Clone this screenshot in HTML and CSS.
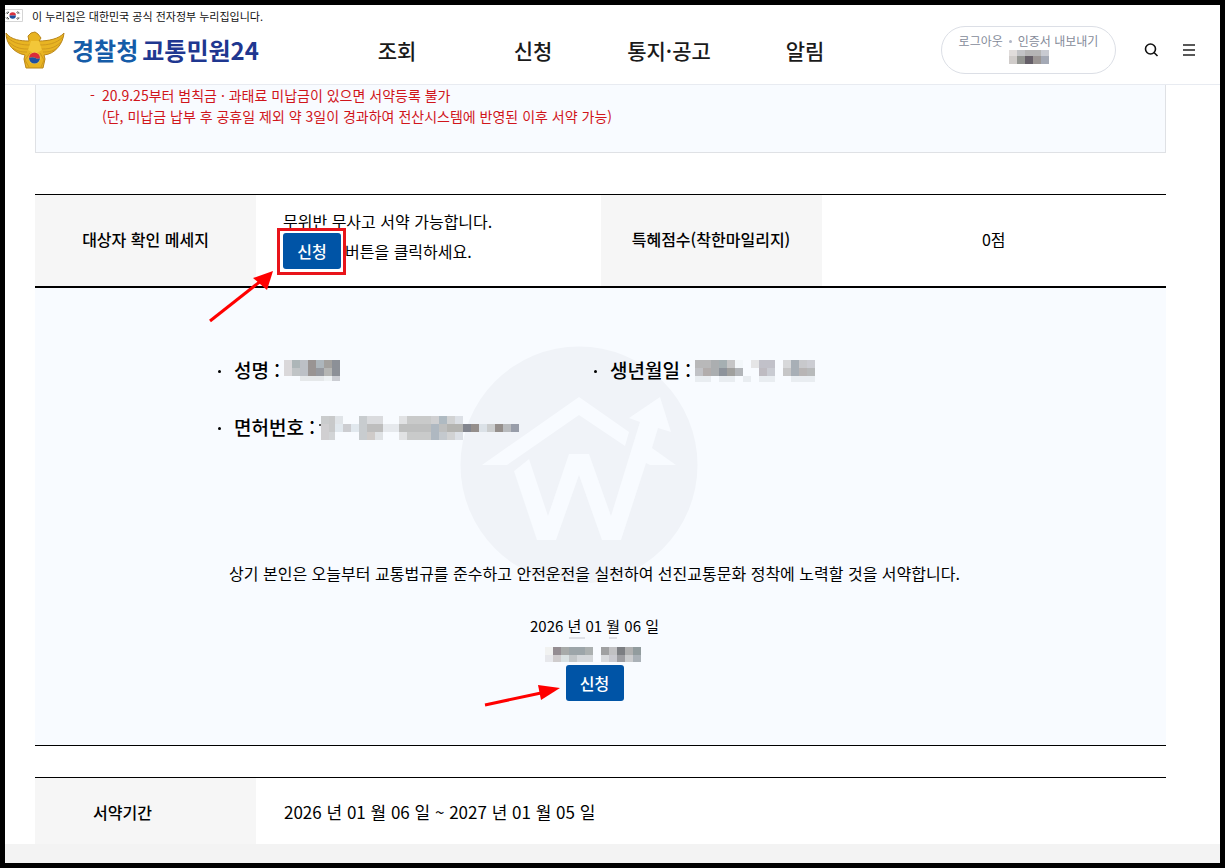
FILE: index.html
```html
<!DOCTYPE html>
<html lang="ko">
	<head>
		<meta charset="utf-8">
		<meta name="viewport" content="width=device-width, initial-scale=1">
		<title>경찰청 교통민원24</title>
		<link rel="stylesheet" href="styles.css">
	</head>

	<body>
		<header class="header">
			<div class="gov">
				<svg class="flag" viewBox="0 0 18 13" aria-hidden="true">
					<path d="M0 .5H17.500V12.500H0" fill="#fff" stroke="#d5d5d5"/>
					<path d="M4.500 6.500a3.200 3.200 0 0 1 6.400 0z" fill="#d8323f"/>
					<path d="M4.500 6.500a3.200 3.200 0 0 0 6.400 0z" fill="#1d4f9e"/>
					<path d="M1 4.500l2-2M2 5l2-2M11.500 3l2 2M12.500 2.300l2 2M1 8.500l2 2M2 8l2 2M11.500 10l2-2M12.500 10.700l2-2" stroke="#444" stroke-width=".9"/>
				</svg>
				<span>이 누리집은 대한민국 공식 전자정부 누리집입니다.</span>
			</div>
			<div class="bar">
				<a class="logo" href="#">
					<svg class="emblem" viewBox="0 0 60 38" aria-hidden="true">
						<path d="M1 2C6 9 16 10 24 10L23 5 26 2 30 1 33 3 36 7 34 10C43 10 54 8 59 2C58 13 50 23 39 24L40 28 38 37H21L19 28 20 24C9 22 1 13 1 2Z" fill="#e8b422" stroke="#b9851a" stroke-width="1"/>
						<path d="M2 6C9 13 18 14 25 14M4 11C11 18 18 18 24 18M8 17C13 21 18 21 22 21M58 6C51 13 42 14 35 14M56 11C49 18 42 18 36 18M52 17C47 21 42 21 38 21M25 22L20 29 24 36M35 22L39 29 36 36" fill="none" stroke="#c8921c" stroke-width=".8"/>
						<path d="M26 10h8l3 9-7 4-7-4z" fill="#f3c739"/>
						<circle cx="29.500" cy="27" r="6" fill="#f6d35a"/>
						<path d="M24 27a5.500 5.500 0 0 1 11 0c-3 3-5-3-11 0z" fill="#d92b3a"/>
						<path d="M24 27a5.500 5.500 0 0 0 11 0c-3 3-5-3-11 0z" fill="#1f50a2"/>
					</svg>
					<span class="police">경찰청</span>
					<span class="minwon">교통민원24</span>
				</a>
				<nav class="nav">
					<a href="#">조회</a>
					<a href="#">신청</a>
					<a href="#">통지·공고</a>
					<a href="#">알림</a>
				</nav>
				<div class="user">
					<div class="links">
						<a href="#">로그아웃</a>
						<i class="sep"></i>
						<a href="#">인증서 내보내기</a>
					</div>
					<svg width="40" height="14" viewBox="0 0 40 14" shape-rendering="crispEdges" aria-hidden="true">
						<path d="M0 0h8v6H0z" fill="#e0dcdb"/><path d="M8 0h8v6H8z" fill="#c2c3c6"/><path d="M16 0h16v6H16z" fill="#b5b5b5"/><path d="M32 0h8v6H32z" fill="#c8cad1"/>
						<path d="M0 6h8v8H0z" fill="#d0ccca"/><path d="M8 6h8v8H8z" fill="#939591"/><path d="M16 6h8v8H16z" fill="#655f68"/><path d="M24 6h8v8H24z" fill="#9b9694"/><path d="M32 6h8v8H32z" fill="#a4a9b5"/>
					</svg>
				</div>
				<button class="icon" type="button" aria-label="검색">
					<svg width="16" height="16" viewBox="0 0 16 16"><circle cx="7.500" cy="7" r="5" fill="none" stroke="#111" stroke-width="1.600"/><path d="M11 10.500L14.500 14" stroke="#111" stroke-width="1.600"/></svg>
				</button>
				<button class="icon" type="button" aria-label="전체메뉴">
					<svg width="16" height="16" viewBox="0 0 16 16"><path d="M2 3h12M2 8h12M2 13h12" stroke="#222" stroke-width="1.500"/></svg>
				</button>
			</div>
		</header>

		<main class="content">
			<div class="notice">
				<p class="dash">20.9.25부터 범칙금 · 과태료 미납금이 있으면 서약등록 불가</p>
				<p>(단, 미납금 납부 후 공휴일 제외 약 3일이 경과하여 전산시스템에 반영된 이후 서약 가능)</p>
			</div>

			<table class="tbl check">
				<tr>
					<th scope="row">대상자 확인 메세지</th>
					<td class="msg">
						<p>무위반 무사고 서약 가능합니다.</p>
						<div class="line">
							<span class="mark">
								<button class="btn" type="button">신청</button>
								<i class="redbox"></i>
								<svg class="arrow1" width="75" height="60" viewBox="205 265 75 60" aria-hidden="true">
									<path d="M210 322L262 281" stroke="#f00" stroke-width="3"/>
									<path d="M273 272L253 279 267 291Z" fill="#f00"/>
								</svg>
							</span>
							<span>버튼을 클릭하세요.</span>
						</div>
					</td>
					<th scope="row">특혜점수(착한마일리지)</th>
					<td class="score">0점</td>
				</tr>
			</table>

			<section class="pledge">
				<svg class="watermark" width="238" height="238" viewBox="0 0 238 238" aria-hidden="true">
					<circle cx="119" cy="119" r="118.500" fill="#f0f3f8"/>
					<path d="M22 119L119 51 169 86 165 100 119 69 47 119Z" fill="#f8fbff"/>
					<path d="M54 125L69 113 88 170 109 108H129L151 170 180 76 169 72 200 51 211 86 198 82 192 102 216 119H190L186 117 161 194H142L119 129 96 194H77Z" fill="#f8fbff"/>
				</svg>

				<ul class="info">
					<li>
						<span class="name">성명 :</span>
						<svg width="56" height="22" viewBox="0 0 56 22" shape-rendering="crispEdges" aria-hidden="true">
							<path d="M0 0h8v16H0z" fill="#dad8da"/><path d="M8 0h8v8H8z" fill="#adb6b8"/><path d="M8 8h8v8H8z" fill="#c0c4c6"/><path d="M16 0h8v16h-8z" fill="#bcc0c6"/><path d="M24 0h8v16h-8z" fill="#999493"/><path d="M32 0h8v8h-8z" fill="#adb6bc"/><path d="M32 8h8v8h-8z" fill="#96999f"/><path d="M40 0h8v8h-8z" fill="#a3a19e"/><path d="M40 8h8v8h-8z" fill="#b5b6b4"/><path d="M48 0h8v16h-8z" fill="#8c9097"/><path d="M16 16h24v5H16z" fill="#e5e8ea"/><path d="M40 16h8v5h-8z" fill="#eef2f4"/><path d="M48 16h8v5h-8z" fill="#cbcdd3"/>
						</svg>
					</li>
					<li>
						<span class="name">생년월일 :</span>
						<svg width="120" height="22" viewBox="0 0 120 22" shape-rendering="crispEdges" aria-hidden="true">
							<path d="M0 0h16v8H0z" fill="#b8b8b9"/><path d="M0 8h8v8H0z" fill="#c1c2c6"/><path d="M8 8h8v8H8z" fill="#b2adac"/><path d="M16 0h8v16h-8z" fill="#abaeb0"/><path d="M24 0h8v8h-8z" fill="#a5afb2"/><path d="M24 8h8v8h-8z" fill="#8d939b"/><path d="M32 0h8v8h-8z" fill="#c5c5c6"/><path d="M32 8h8v8h-8z" fill="#a0a09e"/><path d="M40 8h8v8h-8z" fill="#b2b5b9"/><path d="M40 0h8v8h-8z" fill="#f3f7fa"/>
							<path d="M0 16h16v6H0zM24 16h16v6H24zM48 16h8v6h-8zM64 16h16v6H64zM96 16h24v6H96z" fill="#e9edf1"/>
							<path d="M56 0h8v8h-8z" fill="#e5e5e6"/><path d="M64 0h16v8H64z" fill="#c1c1c9"/><path d="M64 8h8v8h-8z" fill="#bebbc1"/><path d="M72 8h8v8h-8z" fill="#c9cbd2"/><path d="M88 0h8v8h-8z" fill="#d7d8da"/><path d="M88 8h8v8h-8z" fill="#c6c6c7"/><path d="M96 0h8v16h-8z" fill="#a8afb6"/><path d="M104 0h8v8h-8z" fill="#c8c9cc"/><path d="M104 8h8v8h-8z" fill="#b8b5b5"/><path d="M112 0h8v8h-8z" fill="#cccdd3"/><path d="M112 8h8v8h-8z" fill="#b8babb"/>
						</svg>
					</li>
					<li>
						<span class="name">면허번호 :</span>
						<svg class="license" width="200" height="24" viewBox="0 0 200 24" shape-rendering="crispEdges" aria-hidden="true">
							<path d="M0 8h2v2H0z" fill="#555"/><path d="M2 0h8v8H2z" fill="#cacccd"/><path d="M10 0h6v16h-6z" fill="#c8c9ca"/><path d="M2 8h8v16H2z" fill="#d0cfd1"/><path d="M16 0h8v8h-8z" fill="#e0e4e8"/><path d="M10 16h6v8h-6z" fill="#d2d4d6"/><path d="M16 8h8v8h-8zM32 8h8v8h-8z" fill="#e1e8ee"/><path d="M24 8h8v8h-8z" fill="#cccdd1"/>
							<path d="M40 0h8v24h-8z" fill="#c8cccf"/><path d="M48 0h8v8h-8zM56 0h8v8h-8z" fill="#dadbde"/><path d="M48 8h16v8H48z" fill="#bebebe"/><path d="M48 16h8v8h-8z" fill="#cfcbc9"/><path d="M56 16h8v8h-8z" fill="#dfe2e5"/><path d="M64 8h16v8H64z" fill="#e6e9ed"/>
							<path d="M80 0h8v24h-8z" fill="#e1e2e4"/><path d="M88 0h24v24H88z" fill="#c9caca"/><path d="M80 8h48v8H80z" fill="#bebfbf"/><path d="M112 0h8v8h-8zM112 16h8v8h-8z" fill="#d0d0d2"/><path d="M120 16h8v8h-8z" fill="#c4c9ce"/><path d="M120 0h8v8h-8z" fill="#afbac2"/><path d="M112 8h8v16h-8z" fill="#afb8c1"/><path d="M128 0h8v24h-8z" fill="#d1d2d3"/><path d="M136 0h8v8h-8zM136 16h8v8h-8z" fill="#dce0e6"/><path d="M128 8h16v8h-16z" fill="#b4b4b1"/>
							<path d="M144 8h8v8h-8z" fill="#82858e"/><path d="M152 8h8v8h-8z" fill="#958f8c"/><path d="M160 8h8v8h-8z" fill="#dbe1e7"/><path d="M168 8h8v8h-8z" fill="#cbcdce"/><path d="M176 8h8v8h-8z" fill="#958f8c"/><path d="M184 8h8v8h-8z" fill="#b9bbbe"/><path d="M192 8h8v8h-8z" fill="#989da9"/>
						</svg>
					</li>
				</ul>

				<div class="oath">
					<p class="vow">상기 본인은 오늘부터 교통법규를 준수하고 안전운전을 실천하여 선진교통문화 정착에 노력할 것을 서약합니다.</p>
					<p class="date">2026 년 01 월 06 일</p>
					<svg width="102" height="25" viewBox="0 0 102 25" shape-rendering="crispEdges" aria-hidden="true">
						<path d="M25 0h16v2H25zM65 0h8v2h-8z" fill="#dfe2e8"/>
						<path d="M1 10h8v8H1z" fill="#f1f2f1"/><path d="M9 10h8v8H9z" fill="#948d92"/><path d="M17 10h8v8h-8z" fill="#a7aaa9"/><path d="M25 10h16v8H25z" fill="#9ca5a9"/><path d="M41 10h8v8h-8z" fill="#abb0b0"/>
						<path d="M1 18h8v7H1z" fill="#e7e8ec"/><path d="M9 18h8v7H9z" fill="#cfcccd"/><path d="M17 18h8v7h-8z" fill="#d9e1e2"/><path d="M25 18h8v7h-8z" fill="#c2c6c8"/><path d="M33 18h16v7H33z" fill="#d4d7da"/>
						<path d="M57 10h8v8h-8z" fill="#a0a1a2"/><path d="M65 10h8v8h-8z" fill="#c1c1c3"/><path d="M73 10h8v8h-8z" fill="#7c7e82"/><path d="M81 10h8v8h-8z" fill="#b0b0b0"/><path d="M89 10h8v8h-8z" fill="#929c9e"/>
						<path d="M57 18h8v7h-8z" fill="#d8dadd"/><path d="M65 18h8v7h-8z" fill="#c9c9cf"/><path d="M73 18h8v7h-8z" fill="#9d9da1"/><path d="M81 18h8v7h-8z" fill="#cbccce"/><path d="M89 18h8v7h-8z" fill="#aab1b7"/>
					</svg>
					<span class="mark">
						<button class="btn" type="button">신청</button>
						<svg class="arrow2" width="85" height="30" viewBox="480 680 85 30" aria-hidden="true">
							<path d="M485 705L541 693" stroke="#f00" stroke-width="3"/>
							<path d="M560 688L538 685 541 700Z" fill="#f00"/>
						</svg>
					</span>
				</div>
			</section>

			<table class="tbl period">
				<tr>
					<th scope="row">서약기간</th>
					<td>2026 년 01 월 06 일 ~ 2027 년 01 월 05 일</td>
				</tr>
			</table>
		</main>
		<footer class="footer"></footer>
	</body>
</html>
```
FILE: styles.css
```css
* {box-sizing:border-box;}

body {margin:0; min-height:100vh; display:flex; flex-direction:column; border:5px solid #000; background-color:#fff; color:#000; font:16px/30px "Noto Sans CJK KR", "Noto Sans", sans-serif;}

p, ul {margin:0; padding:0;}
a {color:inherit; text-decoration:none;}
button {font-family:inherit; cursor:pointer;}
svg {display:block;}

/* header */
.header {border-bottom:1px solid #e8ebf1; padding-bottom:10px;}
.gov {display:flex; align-items:center; gap:9px; height:21px; font-size:11px; line-height:20px; color:#111;}
.flag {width:18px; height:13px;}
.bar {display:flex; align-items:center; height:48px; padding-right:16px;}
.logo {display:flex; align-items:center; width:324px; font-size:24px; font-weight:700;}
.emblem {width:60px; height:38px; margin-right:7px;}
.police {color:#155ca8; margin-right:4px;}
.minwon {color:#1f3790;}
.nav {flex:1; display:grid; grid-template-columns:repeat(4, 136px); font-size:21px; font-weight:500; color:#1a1a1a; text-align:center;}
.user {display:flex; flex-direction:column; align-items:center; width:175px; height:48px; padding-top:5px; border:1px solid #dcdfe6; border-radius:24px; margin-right:20px;}
.links {display:flex; align-items:center; gap:6px; font-size:12px; line-height:18px; color:#858b9a;}
.sep {width:3px; height:3px; border-radius:2px; background-color:#b0b6c6;}
.icon {width:30px; height:30px; padding:7px; border:0; background:none;}
.icon + .icon {margin-left:8px;}

/* notice */
.content {padding:0 54px 0 30px;}
.notice {padding:0 66px 25px; border:1px solid #dfe1e5; border-top:0; background-color:#f8fbff; color:#d0151b; font-size:14px; line-height:21px;}
.dash::before {content:"-"; float:left; width:12px; margin-left:-12px;}

/* tables */
.tbl {width:100%; border-collapse:separate; border-spacing:0; table-layout:fixed; border-top:1px solid #000;}
.tbl th {width:221px; padding:0 0 4px; background-color:#f6f6f6; font-weight:500; text-align:center;}
.tbl td {padding:0 28px 4px;}
.check {margin-top:41px; border-bottom:2px solid #000;}
.check td {height:91px;}
.check .msg {padding:0 27px 9px;}
.check .score {text-align:center;}
.line {display:flex; align-items:center; gap:4px; height:30px;}
.period {margin-top:31px;}
.period td {height:66px; padding-top:6px; font-size:17px;}
.period th {padding:6px 46px 4px 0;}

/* buttons and marks */
.btn {display:block; width:58px; height:36px; padding:0; border:0; border-radius:3px; background-color:#0054a6; color:#fff; font-size:16px; font-weight:500; line-height:34px;}
.mark {position:relative; z-index:2;}
.redbox {position:absolute; left:-6px; top:-5px; width:69px; height:47px; border:3px solid #e8141a;}
.arrow1 {position:absolute; left:-78px; top:31px;}
.arrow2 {position:absolute; left:-86px; top:15px;}

/* pledge */
.pledge {position:relative; padding:68px 12px 44px 0; border-bottom:1px solid #000; background-color:#f8fbff;}
.watermark {position:absolute; left:425px; top:58px;}
.info {position:relative; display:grid; grid-template-columns:376px 1fr; row-gap:27px; margin-left:183px; list-style:none;}
.info li {display:flex; align-items:center; gap:4px; font-size:19px; font-weight:500;}
.info li::before {content:""; width:3px; height:3px; margin-right:9px; border-radius:2px; background-color:#000;}
.name {height:30px; line-height:28px;}
.oath {position:relative; display:flex; flex-direction:column; align-items:center;}
.vow {margin-top:115px;}
.date {margin:23px 0 -4px; font-size:15px;}
.oath .mark {margin-top:3px;}

.footer {flex:1; background-color:#f3f3f3;}
```
